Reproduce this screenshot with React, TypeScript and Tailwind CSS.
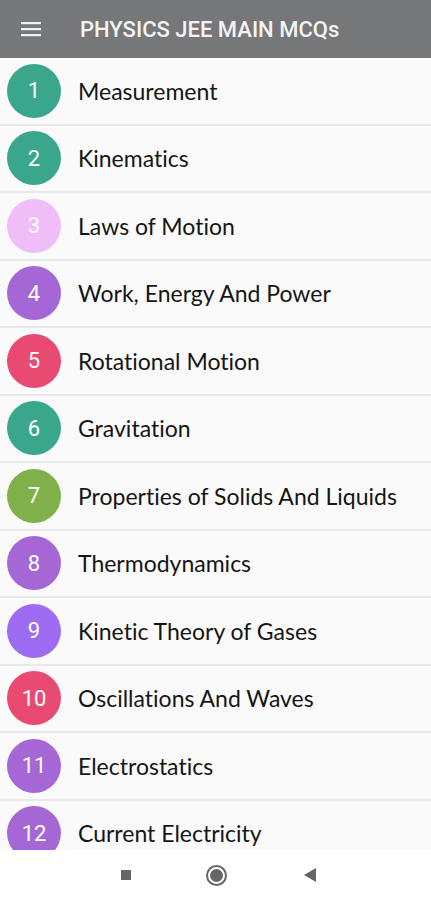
import React from "react";

const items: { n: number; t: string; c: string }[] = [
  { n: 1, t: "Measurement", c: "bg-[#3aa68b]" },
  { n: 2, t: "Kinematics", c: "bg-[#3aa68b]" },
  { n: 3, t: "Laws of Motion", c: "bg-[#efbdf7]" },
  { n: 4, t: "Work, Energy And Power", c: "bg-[#a667d6]" },
  { n: 5, t: "Rotational Motion", c: "bg-[#e94a72]" },
  { n: 6, t: "Gravitation", c: "bg-[#3aa68b]" },
  { n: 7, t: "Properties of Solids And Liquids", c: "bg-[#80b04a]" },
  { n: 8, t: "Thermodynamics", c: "bg-[#a667d6]" },
  { n: 9, t: "Kinetic Theory of Gases", c: "bg-[#9d6cf2]" },
  { n: 10, t: "Oscillations And Waves", c: "bg-[#e94a72]" },
  { n: 11, t: "Electrostatics", c: "bg-[#a667d6]" },
  { n: 12, t: "Current Electricity", c: "bg-[#a667d6]" },
];

export default function App() {
  return (
    <div className="w-[431px] h-[900px] flex flex-col bg-[#fafafa] overflow-hidden" style={{ fontFamily: "Lato, sans-serif" }}>
      <header className="h-[58px] shrink-0 bg-[#767779] flex items-center">
        <svg width="20" height="16" viewBox="0 0 20 16" className="ml-[21px]">
          <rect x="0" y="1" width="20" height="2.2" fill="#f2f2f2" />
          <rect x="0" y="7" width="20" height="2.2" fill="#f2f2f2" />
          <rect x="0" y="13" width="20" height="2.2" fill="#f2f2f2" />
        </svg>
        <span className="ml-[39px] text-[22px] font-medium text-[#f3f3f3]" style={{ fontFamily: "Roboto, sans-serif" }}>
          PHYSICS JEE MAIN MCQs
        </span>
      </header>
      <div className="flex-1 overflow-hidden">
        {items.map((it) => (
          <div key={it.n} className="h-[67.5px] flex items-center border-b-2 border-[#e8e8e8]">
            <div className={`w-[54px] h-[54px] ml-[7px] rounded-full ${it.c} flex items-center justify-center text-white text-[22px]`} style={{ fontFamily: "Roboto, sans-serif" }}>
              {it.n}
            </div>
            <span className="ml-[17px] text-[23px] text-[#151515] [font-variant-ligatures:none]">{it.t}</span>
          </div>
        ))}
      </div>
      <nav className="h-[50px] shrink-0 bg-white flex items-center">
        <div className="w-[10px] h-[10px] bg-[#666] ml-[121px]" />
        <div className="ml-[75px] w-[21px] h-[21px] rounded-full border-2 border-[#666] flex items-center justify-center">
          <div className="w-[13px] h-[13px] rounded-full bg-[#666]" />
        </div>
        <svg width="12" height="14" viewBox="0 0 12 14" className="ml-[77px]">
          <polygon points="12,0 12,14 0,7" fill="#666" />
        </svg>
      </nav>
    </div>
  );
}
